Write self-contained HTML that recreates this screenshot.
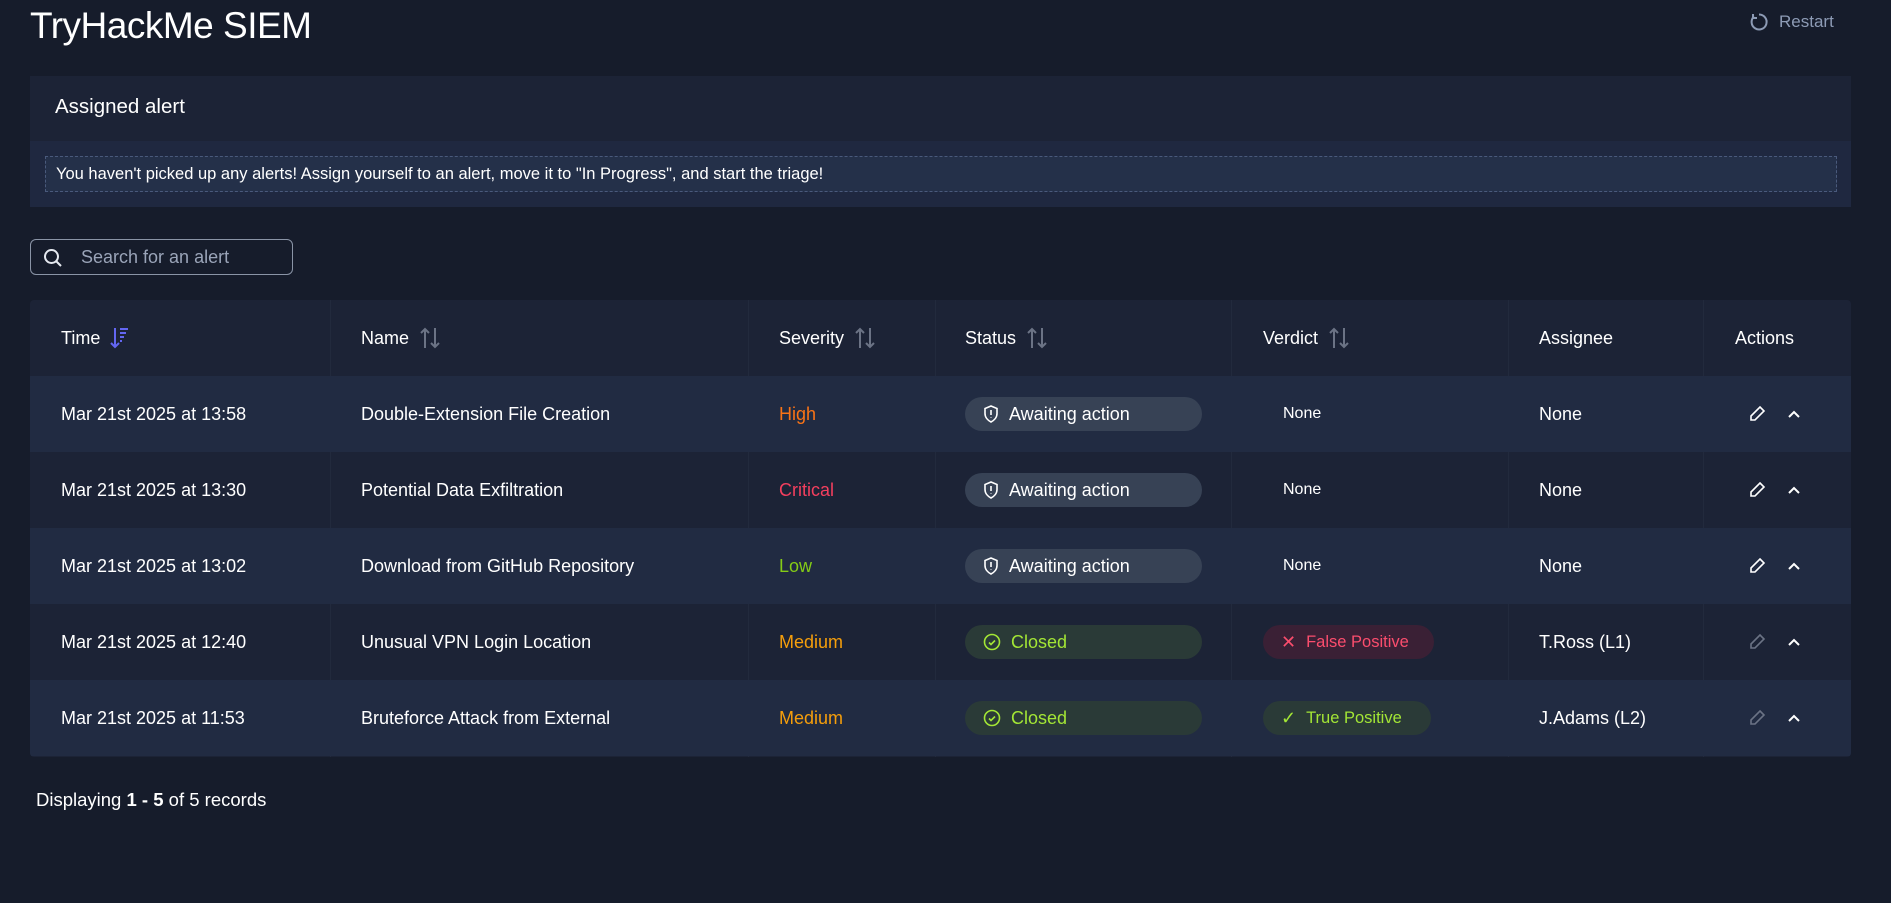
<!DOCTYPE html>
<html><head><meta charset="utf-8"><style>
*{box-sizing:border-box;margin:0;padding:0}
body{width:1891px;height:903px;background:#161c2b;font-family:"Liberation Sans",sans-serif;color:#e5e9f0;position:relative;overflow:hidden}
.abs{position:absolute}
h1{position:absolute;left:30px;top:5px;font-size:37px;font-weight:400;color:#fff;letter-spacing:-0.5px}
.restart{left:1749px;top:12px;color:#8d9bb5;font-size:17px;display:flex;align-items:center;gap:10px}
.panel{left:30px;top:76px;width:1821px;height:131px;background:#1f2840}
.panel .hd{height:65px;background:#1c2336;padding:19px 0 0 25px;font-size:20.5px;color:#fff}
.panel .msg{position:absolute;left:15px;top:80px;width:1792px;height:36px;border:1px dashed #4a5a7c;background:#243049;font-size:16.5px;color:#fff;padding:8px 10px}
.search{left:30px;top:239px;width:263px;height:36px;border:1px solid #8a94a6;border-radius:6px;color:#9aa4b8;font-size:18px;padding:7px 0 0 50px}
.table{left:30px;top:300px;width:1821px;height:457px;background:#1c2336;border-radius:4px;overflow:hidden}
.row{position:absolute;left:0;width:1821px;height:76px;font-size:18px;color:#fff}
.row.l{background:#212b42}
.row div{position:absolute;top:0;height:76px;display:flex;align-items:center}
.vl{position:absolute;top:0;width:1px;height:100%;background:#222a3d}
.st{position:absolute;left:935px!important;top:21px!important;width:237px;height:34px!important;border-radius:17px;background:#374255;padding-left:18px;gap:10px}
.st.c{background:#2a3a37;color:#a3e635}
.vd{position:absolute;top:21px!important;height:34px!important;border-radius:17px;padding:0 18px;gap:10px;font-size:16.5px}
.hdr div{color:#fff}
.arr{margin-left:10px}
</style></head><body>
<h1>TryHackMe SIEM</h1>
<div class="abs restart"><svg width="20" height="20" viewBox="0 0 20 20" fill="none" stroke="#8d9bb5" stroke-width="2"><path d="M5 4.5A7.5 7.5 0 1 0 10 2.5"/><path d="M4 2v4h4" /></svg>Restart</div>
<div class="abs panel"><div class="hd">Assigned alert</div><div class="msg">You haven't picked up any alerts! Assign yourself to an alert, move it to "In Progress", and start the triage!</div></div>
<div class="abs search"><svg class="abs" style="left:12px;top:8px" width="20" height="20" viewBox="0 0 20 20" fill="none" stroke="#e5e9f0" stroke-width="2"><circle cx="8.5" cy="8.5" r="6.5"/><path d="M13.5 13.5l4.5 4.5"/></svg>Search for an alert</div>
<div class="abs table">
<div class="vl" style="left:300px"></div><div class="vl" style="left:718px"></div><div class="vl" style="left:905px"></div><div class="vl" style="left:1201px"></div><div class="vl" style="left:1478px"></div><div class="vl" style="left:1673px"></div>
<div class="row hdr" style="top:0">
<div style="left:31px">Time<svg style="margin-left:10px" width="20" height="24" viewBox="0 0 20 24" fill="none" stroke="#6366f1" stroke-width="2"><path d="M5 2v19M1 17l4 4 4-4M10 3h8M10 7h6M10 11h4M10 15h2"/></svg></div>
<div style="left:331px">Name<svg class="arr" width="22" height="24" viewBox="0 0 22 24" fill="none" stroke="#6b7385" stroke-width="2"><path d="M6 22V3M2 7l4-4 4 4M16 2v19M12 17l4 4 4-4"/></svg></div>
<div style="left:749px">Severity<svg class="arr" width="22" height="24" viewBox="0 0 22 24" fill="none" stroke="#6b7385" stroke-width="2"><path d="M6 22V3M2 7l4-4 4 4M16 2v19M12 17l4 4 4-4"/></svg></div>
<div style="left:935px">Status<svg class="arr" width="22" height="24" viewBox="0 0 22 24" fill="none" stroke="#6b7385" stroke-width="2"><path d="M6 22V3M2 7l4-4 4 4M16 2v19M12 17l4 4 4-4"/></svg></div>
<div style="left:1233px">Verdict<svg class="arr" width="22" height="24" viewBox="0 0 22 24" fill="none" stroke="#6b7385" stroke-width="2"><path d="M6 22V3M2 7l4-4 4 4M16 2v19M12 17l4 4 4-4"/></svg></div>
<div style="left:1509px">Assignee</div>
<div style="left:1705px">Actions</div>
</div>
<div class="row l" style="top:76px"><div style="left:31px">Mar 21st 2025 at 13:58</div><div style="left:331px">Double-Extension File Creation</div><div style="left:749px;color:#f97316">High</div>
<div class="st"><svg width="16" height="18" viewBox="0 0 16 18" fill="none" stroke="#fff" stroke-width="1.6"><path d="M8 1l6 2.5v5c0 4-3 7-6 8.5-3-1.5-6-4.5-6-8.5v-5z"/><path d="M8 5v5M8 12.5v.5"/></svg>Awaiting action</div>
<div style="left:1253px;font-size:16px">None</div><div style="left:1509px">None</div>
<div style="left:1718px"><svg width="18" height="18" viewBox="0 0 18 18" fill="none" stroke="#fff" stroke-width="1.6"><path d="M12 2l4 4-9 9H3v-4z"/></svg></div><div style="left:1757px"><svg width="14" height="10" viewBox="0 0 14 10" fill="none" stroke="#fff" stroke-width="2"><path d="M2 8l5-5 5 5"/></svg></div></div>
<div class="row" style="top:152px"><div style="left:31px">Mar 21st 2025 at 13:30</div><div style="left:331px">Potential Data Exfiltration</div><div style="left:749px;color:#f43f5e">Critical</div>
<div class="st"><svg width="16" height="18" viewBox="0 0 16 18" fill="none" stroke="#fff" stroke-width="1.6"><path d="M8 1l6 2.5v5c0 4-3 7-6 8.5-3-1.5-6-4.5-6-8.5v-5z"/><path d="M8 5v5M8 12.5v.5"/></svg>Awaiting action</div>
<div style="left:1253px;font-size:16px">None</div><div style="left:1509px">None</div>
<div style="left:1718px"><svg width="18" height="18" viewBox="0 0 18 18" fill="none" stroke="#fff" stroke-width="1.6"><path d="M12 2l4 4-9 9H3v-4z"/></svg></div><div style="left:1757px"><svg width="14" height="10" viewBox="0 0 14 10" fill="none" stroke="#fff" stroke-width="2"><path d="M2 8l5-5 5 5"/></svg></div></div>
<div class="row l" style="top:228px"><div style="left:31px">Mar 21st 2025 at 13:02</div><div style="left:331px">Download from GitHub Repository</div><div style="left:749px;color:#84cc16">Low</div>
<div class="st"><svg width="16" height="18" viewBox="0 0 16 18" fill="none" stroke="#fff" stroke-width="1.6"><path d="M8 1l6 2.5v5c0 4-3 7-6 8.5-3-1.5-6-4.5-6-8.5v-5z"/><path d="M8 5v5M8 12.5v.5"/></svg>Awaiting action</div>
<div style="left:1253px;font-size:16px">None</div><div style="left:1509px">None</div>
<div style="left:1718px"><svg width="18" height="18" viewBox="0 0 18 18" fill="none" stroke="#fff" stroke-width="1.6"><path d="M12 2l4 4-9 9H3v-4z"/></svg></div><div style="left:1757px"><svg width="14" height="10" viewBox="0 0 14 10" fill="none" stroke="#fff" stroke-width="2"><path d="M2 8l5-5 5 5"/></svg></div></div>
<div class="row" style="top:304px"><div style="left:31px">Mar 21st 2025 at 12:40</div><div style="left:331px">Unusual VPN Login Location</div><div style="left:749px;color:#f59e0b">Medium</div>
<div class="st c"><svg width="18" height="18" viewBox="0 0 18 18" fill="none" stroke="#a3e635" stroke-width="1.6"><circle cx="9" cy="9" r="7.5"/><path d="M6 9.5l2 2 4-4"/></svg>Closed</div>
<div class="vd" style="left:1233px;width:171px;background:#3a2035;color:#fb4d6d"><span style="font-size:18px">✕</span>False Positive</div>
<div style="left:1509px">T.Ross (L1)</div>
<div style="left:1718px"><svg width="18" height="18" viewBox="0 0 18 18" fill="none" stroke="#6b7385" stroke-width="1.6"><path d="M12 2l4 4-9 9H3v-4z"/></svg></div><div style="left:1757px"><svg width="14" height="10" viewBox="0 0 14 10" fill="none" stroke="#fff" stroke-width="2"><path d="M2 8l5-5 5 5"/></svg></div></div>
<div class="row l" style="top:380px"><div style="left:31px">Mar 21st 2025 at 11:53</div><div style="left:331px">Bruteforce Attack from External</div><div style="left:749px;color:#f59e0b">Medium</div>
<div class="st c"><svg width="18" height="18" viewBox="0 0 18 18" fill="none" stroke="#a3e635" stroke-width="1.6"><circle cx="9" cy="9" r="7.5"/><path d="M6 9.5l2 2 4-4"/></svg>Closed</div>
<div class="vd" style="left:1233px;width:168px;background:#2a3a37;color:#a3e635"><span style="font-size:18px">✓</span>True Positive</div>
<div style="left:1509px">J.Adams (L2)</div>
<div style="left:1718px"><svg width="18" height="18" viewBox="0 0 18 18" fill="none" stroke="#6b7385" stroke-width="1.6"><path d="M12 2l4 4-9 9H3v-4z"/></svg></div><div style="left:1757px"><svg width="14" height="10" viewBox="0 0 14 10" fill="none" stroke="#fff" stroke-width="2"><path d="M2 8l5-5 5 5"/></svg></div></div>
</div>
<div class="abs" style="left:36px;top:789px;font-size:18.5px;color:#fff">Displaying <b>1 - 5</b> of 5 records</div>
</body></html>
